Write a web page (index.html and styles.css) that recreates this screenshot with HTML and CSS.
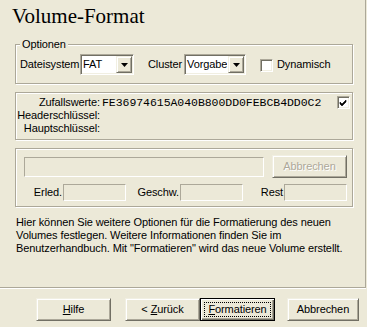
FILE: index.html
```html
<!DOCTYPE html>
<html lang="de">
<head>
<meta charset="utf-8">
<title>Volume-Format</title>
<link rel="stylesheet" href="styles.css">
</head>
<body>
<div class="panel">
  <h1 class="title">Volume-Format</h1>

  <div class="group opts">
    <span class="legend">Optionen</span>
    <span class="lbl lbl-ds">Dateisystem</span>
    <div class="combo combo-fat">
      <span class="val">FAT</span>
      <span class="drop"><svg width="7" height="4" viewBox="0 0 7 4"><path d="M0 0h7L3.5 4z" fill="#000"/></svg></span>
    </div>
    <span class="lbl lbl-cl">Cluster</span>
    <div class="combo combo-clu">
      <span class="val">Vorgabe</span>
      <span class="drop"><svg width="7" height="4" viewBox="0 0 7 4"><path d="M0 0h7L3.5 4z" fill="#000"/></svg></span>
    </div>
    <span class="check check-dyn"></span>
    <span class="lbl lbl-dyn">Dynamisch</span>
  </div>

  <div class="group keys">
    <div class="kgrid">
      <span class="klbl">Zufallswerte:</span><span class="kval">FE36974615A040B800DD0FEBCB4DD0C2</span>
      <span class="klbl">Headerschlüssel:</span><span class="kval"></span>
      <span class="klbl">Hauptschlüssel:</span><span class="kval"></span>
    </div>
    <span class="check check-keys"><svg width="9" height="9" viewBox="0 0 9 9"><path d="M1 4l2 2 4-4v2l-4 4-2-2z" fill="#000" stroke="#000" stroke-width="0.6"/></svg></span>
  </div>

  <div class="group prog">
    <div class="prow">
      <div class="field bar"></div>
      <button class="btn btn-dis" type="button">Abbrechen</button>
    </div>
    <div class="srow">
      <span class="slbl s1">Erled.</span><div class="field sbox"></div>
      <span class="slbl s2">Geschw.</span><div class="field sbox"></div>
      <span class="slbl s3">Rest</span><div class="field sbox"></div>
    </div>
  </div>

  <p class="info">Hier können Sie weitere Optionen für die Formatierung des neuen<br>Volumes festlegen. Weitere Informationen finden Sie im<br>Benutzerhandbuch. Mit "Formatieren" wird das neue Volume erstellt.</p>
</div>
<div class="sep"></div>
<div class="buttons">
  <button class="btn b-help" type="button"><u>H</u>ilfe</button>
  <button class="btn b-back" type="button">&lt; <u>Z</u>urück</button>
  <button class="btn btn-def b-fmt" type="button"><span class="focus"><u>F</u>ormatieren</span></button>
  <button class="btn b-cancel" type="button">Abbrechen</button>
</div>
</body>
</html>
```

FILE: styles.css
```css
* { box-sizing: border-box; }
html, body { margin: 0; padding: 0; }
body {
  width: 367px;
  height: 327px;
  overflow: hidden;
  background: #ece9d8;
  color: #000;
  font: 11px "Liberation Sans", Arial, sans-serif;
  letter-spacing: -0.1px;
}

.panel {
  width: 366px;
  height: 287px;
  padding-top: 4px;
  border-right: 1px solid #aca899;
}

.title {
  margin: 0 0 0 12px;
  font: normal 21px/24px "Liberation Serif", "Times New Roman", serif;
  letter-spacing: 0;
}

.group {
  position: relative;
  margin-left: 15px;
  width: 338px;
  border: 1px solid #aca899;
  box-shadow: inset 1px 1px #fff, 1px 1px #fff;
}

.legend {
  position: absolute;
  top: -7px;
  left: 4px;
  padding: 0 2px;
  line-height: 12px;
  background: #ece9d8;
}

/* Optionen */
.opts {
  margin-top: 16px;
  height: 40px;
  padding: 9px 0 0 4px;
  display: flex;
  align-items: flex-start;
}
.lbl { line-height: 21px; white-space: nowrap; }
.lbl-ds { width: 60px; }
.lbl-cl { width: 36px; margin-left: 14px; }
.lbl-dyn { margin-left: 4px; }

.combo {
  display: flex;
  height: 21px;
  background: #fff;
  border: 1px solid;
  border-color: #aca899 #fff #fff #aca899;
  box-shadow: inset 1px 1px #716f64, inset -1px -1px #f1efe2;
}
.combo-fat { width: 54px; }
.combo-clu { width: 62px; }
.combo .val {
  flex: 1;
  padding-left: 2px;
  line-height: 19px;
  white-space: nowrap;
  overflow: hidden;
}
.drop {
  width: 16px;
  height: 17px;
  margin: 1px;
  display: flex;
  align-items: center;
  justify-content: center;
  background: #ece9d8;
  border: 1px solid;
  border-color: #f1efe2 #716f64 #716f64 #f1efe2;
  box-shadow: inset 1px 1px #fff, inset -1px -1px #aca899;
}
.drop svg { display: block; }

.check {
  width: 13px;
  height: 13px;
  flex: none;
  display: flex;
  align-items: center;
  justify-content: center;
  background: #fff;
  border: 1px solid;
  border-color: #aca899 #fff #fff #aca899;
  box-shadow: inset 1px 1px #716f64, inset -1px -1px #f1efe2;
}
.check svg { display: block; }
.check-dyn { margin: 5px 0 0 14px; }

/* Schlüssel */
.keys {
  margin-top: 8px;
  height: 48px;
  display: flex;
  align-items: flex-start;
  padding: 3px 2px 0 0;
}
.kgrid {
  display: grid;
  grid-template-columns: 84px auto;
  column-gap: 2px;
  line-height: 13px;
}
.klbl { text-align: right; white-space: nowrap; }
.kval {
  font: 11.5px/13px "Liberation Mono", "Courier New", monospace;
  letter-spacing: -0.05px;
  white-space: nowrap;
}
.check-keys { margin-left: auto; }

/* Fortschritt */
.prog {
  margin-top: 8px;
  height: 59px;
  padding: 6px 0 0 8px;
}
.prow {
  display: flex;
  align-items: flex-start;
}
.field {
  border: 1px solid;
  border-color: #aca899 #fff #fff #aca899;
}
.bar {
  width: 240px;
  height: 20px;
  margin-top: 2px;
}
.prow .btn { margin-left: 8px; }
.srow {
  display: flex;
  margin: 6px 0 0 -8px;
}
.slbl {
  line-height: 17px;
  text-align: right;
  padding-right: 1px;
  white-space: nowrap;
}
.s1 { width: 47px; }
.s2 { width: 54px; }
.s3 { width: 41px; }
.sbox { width: 63px; height: 17px; }

.info {
  margin: 9px 0 0 16px;
  line-height: 13px;
  white-space: nowrap;
}

.sep {
  width: 366px;
  height: 2px;
  border-top: 1px solid #aca899;
  border-bottom: 1px solid #fff;
}

/* Buttons */
.btn {
  appearance: none;
  margin: 0;
  padding: 0;
  width: 75px;
  height: 23px;
  font: 11px/21px "Liberation Sans", Arial, sans-serif;
  letter-spacing: -0.1px;
  color: #000;
  text-align: center;
  background: #ece9d8;
  border: 1px solid;
  border-color: #f1efe2 #716f64 #716f64 #f1efe2;
  box-shadow: inset 1px 1px #fff, inset -1px -1px #aca899;
  white-space: nowrap;
}
.btn-dis {
  color: #aca899;
  text-shadow: 1px 1px #fff;
}
.btn-def {
  border-color: #000;
  box-shadow: inset 1px 1px #fff, inset -1px -1px #716f64, inset -2px -2px #aca899;
}
.focus {
  display: block;
  margin: 3px;
  border: 1px dotted #000;
  line-height: 13px;
}

.buttons {
  display: flex;
  padding: 9px 0 0 36px;
}
.b-back { margin-left: 14px; }
.b-cancel { margin-left: 12px; width: 72px; }
```
